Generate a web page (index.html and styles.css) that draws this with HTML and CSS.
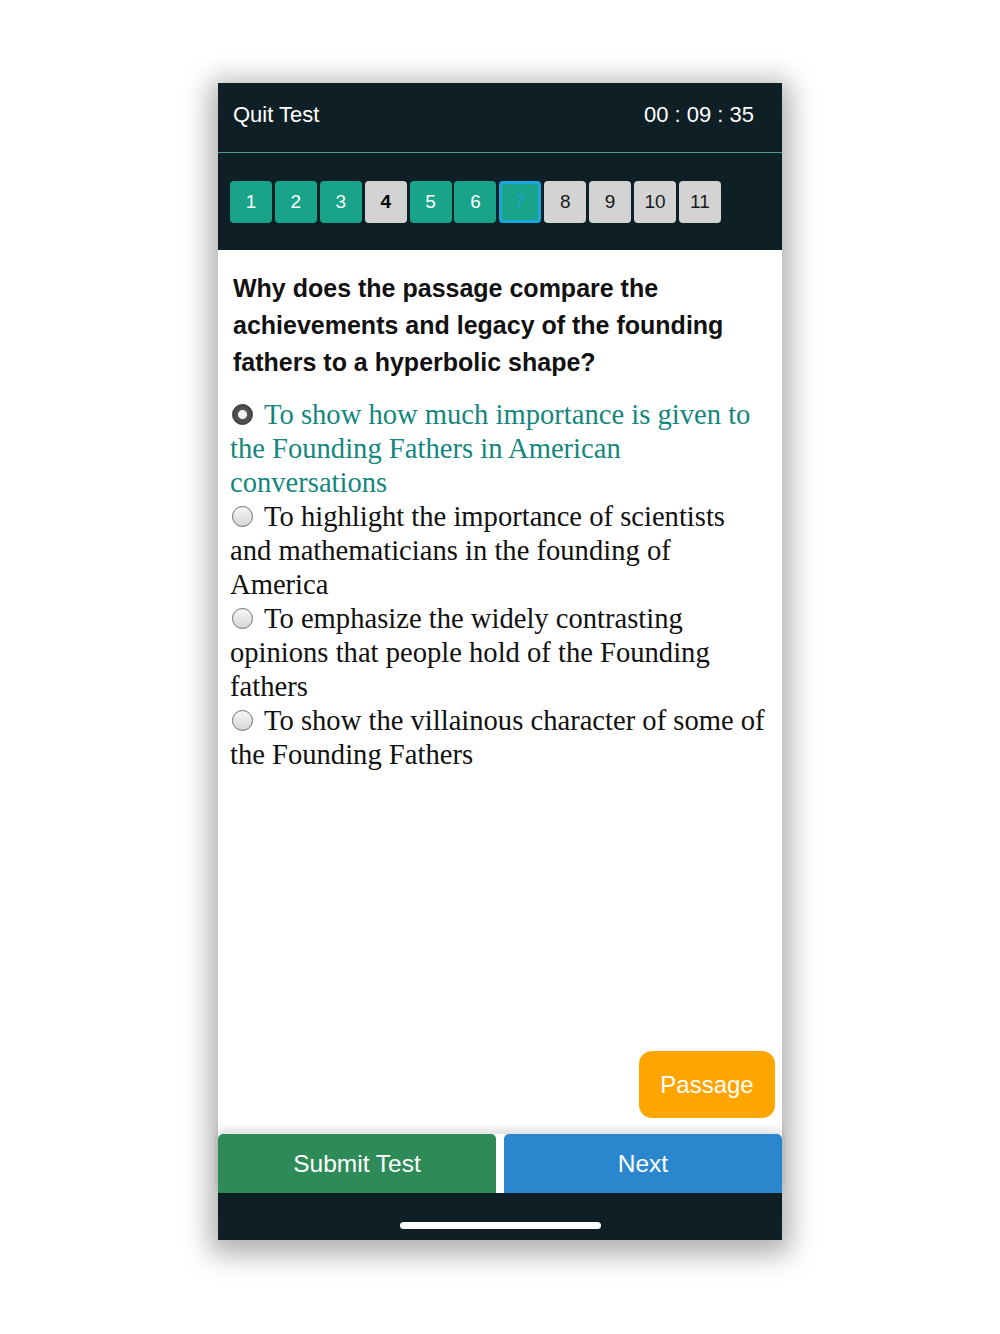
FILE: index.html
```html
<!DOCTYPE html>
<html>
<head>
<meta charset="utf-8">
<link rel="stylesheet" href="styles.css">
</head>
<body>
<div class="stage">
  <div class="phone">
    <header class="topbar">
      <span class="quit">Quit Test</span>
      <span class="timer">00 : 09 : 35</span>
    </header>
    <nav class="qnav">
      <span class="qbtn done">1</span>
      <span class="qbtn done">2</span>
      <span class="qbtn done">3</span>
      <span class="qbtn todo bold">4</span>
      <span class="qbtn done">5</span>
      <span class="qbtn done">6</span>
      <span class="qbtn current">7</span>
      <span class="qbtn todo">8</span>
      <span class="qbtn todo">9</span>
      <span class="qbtn todo">10</span>
      <span class="qbtn todo">11</span>
    </nav>
    <main class="content">
      <h1 class="question">Why does the passage compare the achievements and legacy of the founding fathers to a hyperbolic shape?</h1>
      <div class="options">
        <div class="option selected"><span class="radio on"></span>To show how much importance is given to the Founding Fathers in American conversations</div>
        <div class="option"><span class="radio"></span>To highlight the importance of scientists and mathematicians in the founding of America</div>
        <div class="option"><span class="radio"></span>To emphasize the widely contrasting opinions that people hold of the Founding fathers</div>
        <div class="option"><span class="radio"></span>To show the villainous character of some of the Founding Fathers</div>
      </div>
      <button class="passage">Passage</button>
    </main>
    <footer class="actions">
      <button class="act submit">Submit Test</button>
      <button class="act next">Next</button>
    </footer>
    <div class="homebar"><span class="indicator"></span></div>
  </div>
</div>
</body>
</html>
```

FILE: styles.css
```css
html, body {
  margin: 0;
  padding: 0;
  background: #ffffff;
}
.stage {
  display: flex;
  justify-content: center;
  padding: 83px 0 60px;
}
.phone {
  width: 564px;
  height: 1157px;
  display: flex;
  flex-direction: column;
  background: #ffffff;
  box-shadow: 0 6px 26px 8px rgba(0,0,0,0.32);
}
.topbar {
  flex: none;
  height: 70px;
  box-sizing: border-box;
  background: #0f1f26;
  border-bottom: 1px solid #4e9a92;
  display: flex;
  align-items: center;
  justify-content: space-between;
  padding: 0 28px 5px 15px;
  color: #ffffff;
  font-family: "Liberation Sans", Arial, sans-serif;
  font-size: 22px;
}
.qnav {
  flex: none;
  height: 97px;
  box-sizing: border-box;
  background: #0f1f26;
  display: flex;
  align-items: flex-start;
  gap: 2.9px;
  padding: 28px 0 0 12px;
}
.qbtn {
  width: 42px;
  height: 42px;
  box-sizing: border-box;
  border-radius: 4px;
  display: flex;
  align-items: center;
  justify-content: center;
  font-family: "Liberation Sans", Arial, sans-serif;
  font-size: 19px;
}
.qbtn.done {
  background: #19a389;
  color: #ffffff;
}
.qbtn.todo {
  background: #d3d3d3;
  color: #1a1a1a;
}
.qbtn.bold {
  color: #000;
  font-weight: 600;
}
.qbtn.current {
  background: #19a389;
  border: 3px solid #1aa5dc;
  color: #1aa0d8;
}
.content {
  flex: 1;
  display: flex;
  flex-direction: column;
  padding: 20px 14px 16px 12px;
  min-height: 0;
}
.question {
  margin: 0 0 17px 3px;
  font-family: "Liberation Sans", Arial, sans-serif;
  font-weight: bold;
  font-size: 25px;
  line-height: 37px;
  color: #111111;
}
.options {
  font-family: "Liberation Serif", "Times New Roman", serif;
  font-size: 28.6px;
  line-height: 34px;
  color: #111111;
}
.option.selected {
  color: #13877e;
}
.radio {
  display: inline-block;
  width: 21px;
  height: 21px;
  box-sizing: border-box;
  border-radius: 50%;
  border: 1.5px solid #6c6c6c;
  background: linear-gradient(#f6f6f6, #d6d6d6);
  margin: 0 11px 0 2px;
  vertical-align: -1px;
}
.radio.on {
  border: 1.5px solid #333;
  background: radial-gradient(circle, #f2f2f2 0 4px, #555 5px, #3a3a3a 100%);
}
.passage {
  margin-top: auto;
  margin-right: -7px;
  align-self: flex-end;
  width: 136px;
  height: 67px;
  border: none;
  border-radius: 13px;
  background: #ffa500;
  color: #ffffff;
  font-family: "Liberation Sans", Arial, sans-serif;
  font-size: 24px;
}
.actions {
  flex: none;
  height: 59px;
  display: flex;
  gap: 8px;
  background: #ffffff;
  box-shadow: 0 -5px 8px rgba(0,0,0,0.12);
  position: relative;
}
.act {
  flex: 1;
  border: none;
  border-radius: 5px 5px 0 0;
  color: #ffffff;
  font-family: "Liberation Sans", Arial, sans-serif;
  font-size: 24.5px;
}
.submit {
  background: #2e8b57;
}
.next {
  background: #2b87cd;
}
.homebar {
  flex: none;
  height: 47px;
  box-sizing: border-box;
  background: #0f1f26;
  display: flex;
  justify-content: center;
  align-items: flex-start;
  padding-top: 29px;
}
.indicator {
  width: 201px;
  height: 7px;
  border-radius: 4px;
  background: #ffffff;
}
```
